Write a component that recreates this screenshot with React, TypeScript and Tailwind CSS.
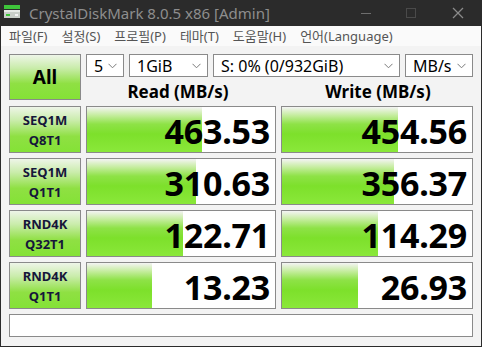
import React from "react";

const font = "font-['Noto_Sans','Noto_Sans_CJK_KR',sans-serif]";

const menus = ["파일(F)", "설정(S)", "프로필(P)", "테마(T)", "도움말(H)", "언어(Language)"];

const rows = [
  { l1: "SEQ1M", l2: "Q8T1", read: "463.53", write: "454.56", rw: "w-[115px]", ww: "w-[116px]" },
  { l1: "SEQ1M", l2: "Q1T1", read: "310.63", write: "356.37", rw: "w-[109px]", ww: "w-[112px]" },
  { l1: "RND4K", l2: "Q32T1", read: "122.71", write: "114.29", rw: "w-[96px]", ww: "w-[96px]" },
  { l1: "RND4K", l2: "Q1T1", read: "13.23", write: "26.93", rw: "w-[65px]", ww: "w-[76px]" },
];

const labelBg =
  "bg-[linear-gradient(180deg,#eef5e8_0%,#c9ecaa_30%,#8fe043_65%,#84e236_100%)]";
const barBg =
  "bg-[linear-gradient(180deg,#f4f4f4_0%,#c6eda0_18%,#8ee247_38%,#7de02b_60%,#8ae83a_100%)]";

function Chevron() {
  return (
    <svg width="9" height="6" viewBox="0 0 9 6" className="shrink-0">
      <polyline points="0.5,0.8 4.5,4.8 8.5,0.8" fill="none" stroke="#7a7a7a" strokeWidth="1" />
    </svg>
  );
}

function Select({ w, text }: { w: string; text: string }) {
  return (
    <div
      className={`${w} h-[23px] bg-white border border-[#8a8a8a] flex items-center justify-between pl-[7px] pr-[6px] text-[16px] text-black leading-none`}
    >
      <span>{text}</span>
      <Chevron />
    </div>
  );
}

function Cell({ value, fill }: { value: string; fill: string }) {
  return (
    <div className="relative h-[47px] bg-white border border-[#8a8a8a] flex items-center justify-end pr-[5px]">
      <div className={`absolute left-0 top-0 bottom-0 ${fill} ${barBg}`} />
      <span className="relative text-[34px] font-bold leading-none text-black tracking-[-0.2px] pt-[3px]">
        {value}
      </span>
    </div>
  );
}

export default function App() {
  return (
    <div className={`w-[482px] h-[347px] bg-[#2b2b2b] flex flex-col overflow-hidden ${font}`}>
      {/* title bar */}
      <div className="h-[26px] flex items-center shrink-0">
        <svg width="18" height="18" viewBox="0 0 18 18" className="ml-[4px]">
          <rect x="0" y="1" width="16" height="4" fill="#3ec43a" />
          <rect x="0" y="6" width="16" height="8" fill="#c9cfc9" />
          <rect x="0" y="6" width="16" height="2" fill="#e7ebe7" />
          <rect x="2" y="10" width="4" height="2" fill="#3ec43a" />
          <rect x="11" y="10" width="3" height="2" fill="#f4f4f4" />
        </svg>
        <span className="ml-[7px] text-[15px] text-[#8e8e8e] leading-none">
          CrystalDiskMark 8.0.5 x86 [Admin]
        </span>
        <div className="ml-auto flex items-center">
          <svg width="12" height="12" viewBox="0 0 12 12" className="mr-[33px]">
            <line x1="1" y1="6.5" x2="11" y2="6.5" stroke="#6e6e6e" strokeWidth="1" />
          </svg>
          <svg width="12" height="12" viewBox="0 0 12 12" className="mr-[35px]">
            <rect x="1.5" y="1.5" width="9" height="9" fill="none" stroke="#4a4a4a" strokeWidth="1" />
          </svg>
          <svg width="12" height="12" viewBox="0 0 12 12" className="mr-[18px]">
            <line x1="1" y1="1" x2="11" y2="11" stroke="#8a8a8a" strokeWidth="1.2" />
            <line x1="11" y1="1" x2="1" y2="11" stroke="#8a8a8a" strokeWidth="1.2" />
          </svg>
        </div>
      </div>

      {/* window body */}
      <div className="flex-1 mx-[1px] mb-[1px] bg-[#f3f3f3] flex flex-col">
        {/* menu */}
        <div className="h-[20px] bg-[#fafafa] flex items-center pl-[8px] gap-[14px] text-[13px] text-[#555] leading-none">
          {menus.map((m) => (
            <span key={m}>{m}</span>
          ))}
        </div>

        <div className="pt-[8px] pl-[8px] flex flex-col">
          {/* top controls */}
          <div className="flex gap-[5px]">
            <div
              className={`w-[72px] h-[46px] border border-[#8a8a8a] ${labelBg} flex items-center justify-center text-[19px] font-bold text-black`}
            >
              All
            </div>
            <div className="flex flex-col">
              <div className="flex gap-[5px]">
                <Select w="w-[38px]" text="5" />
                <Select w="w-[79px]" text="1GiB" />
                <Select w="w-[187px]" text="S: 0% (0/932GiB)" />
                <Select w="w-[68px]" text="MB/s" />
              </div>
              <div className="grid grid-cols-[190px_192px] gap-x-[5px] h-[23px] items-end text-[17px] font-bold text-black leading-none">
                <div className="text-center -translate-x-[3px]">Read (MB/s)</div>
                <div className="text-center translate-x-[1px]">Write (MB/s)</div>
              </div>
            </div>
          </div>

          {/* result rows */}
          <div className="mt-[6px] grid grid-cols-[72px_190px_192px] gap-x-[5px] gap-y-[5px]">
            {rows.map((r) => (
              <React.Fragment key={r.read}>
                <div
                  className={`h-[47px] border border-[#8a8a8a] ${labelBg} flex flex-col items-center justify-center text-[13px] font-bold text-[#16163a] leading-[20px]`}
                >
                  <span>{r.l1}</span>
                  <span>{r.l2}</span>
                </div>
                <Cell value={r.read} fill={r.rw} />
                <Cell value={r.write} fill={r.ww} />
              </React.Fragment>
            ))}
          </div>

          {/* status */}
          <div className="mt-[5px] w-[464px] h-[23px] bg-white border border-[#8a8a8a]" />
        </div>
      </div>
    </div>
  );
}
